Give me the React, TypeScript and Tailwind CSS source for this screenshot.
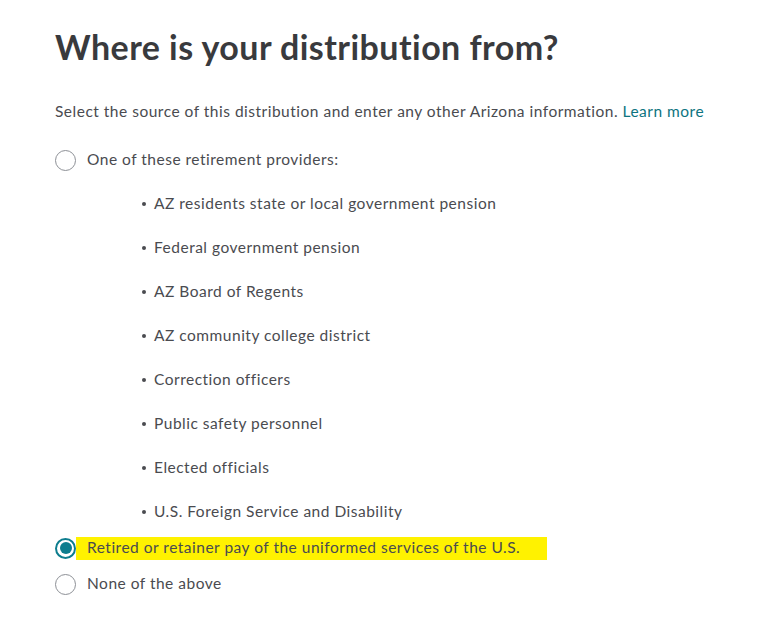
const providers = [
  'AZ residents state or local government pension',
  'Federal government pension',
  'AZ Board of Regents',
  'AZ community college district',
  'Correction officers',
  'Public safety personnel',
  'Elected officials',
  'U.S. Foreign Service and Disability',
]

function Radio({ checked }: { checked?: boolean }) {
  return checked ? (
    <span className="flex h-[21px] w-[21px] shrink-0 items-center justify-center rounded-full border-2 border-[#0d7d8e] bg-white">
      <span className="h-[12px] w-[12px] rounded-full bg-[#0d7d8e]" />
    </span>
  ) : (
    <span className="h-[21px] w-[21px] shrink-0 rounded-full border border-[#8d9096] bg-white" />
  )
}

export default function App() {
  return (
    <main className="min-h-screen bg-white pl-[55px] pt-[25px] font-['Lato',sans-serif] text-[#393a3d]">
      <h1 className="text-[34px] font-bold leading-[44px] tracking-[0.45px]">Where is your distribution from?</h1>

      <p className="mt-[31px] text-[15.5px] leading-[22px] tracking-[0.5px] text-[#4a4b50]">
        Select the source of this distribution and enter any other Arizona information.{' '}
        <a href="#" className="text-[#0d7480]">Learn more</a>
      </p>

      <div className="mt-[27px] flex flex-col text-[15.5px] tracking-[0.5px] text-[#4a4b50]">
        <label className="flex h-[22px] items-center">
          <Radio />
          <span className="ml-[11px]">One of these retirement providers:</span>
        </label>

        <ul className="mt-[22px] flex flex-col gap-[22px] pl-[87px]">
          {providers.map((p) => (
            <li key={p} className="flex h-[22px] items-center">
              <span className="mr-[8px] h-[4px] w-[4px] rounded-full bg-[#4a4b50]" />
              {p}
            </li>
          ))}
        </ul>

        <label className="mt-[14px] flex h-[22px] items-center">
          <Radio checked />
          <span className="flex h-[23px] w-[471px] items-center bg-[#fff200] pl-[11px]">
            Retired or retainer pay of the uniformed services of the U.S.
          </span>
        </label>

        <label className="mt-[14px] flex h-[22px] items-center">
          <Radio />
          <span className="ml-[11px]">None of the above</span>
        </label>
      </div>
    </main>
  )
}
